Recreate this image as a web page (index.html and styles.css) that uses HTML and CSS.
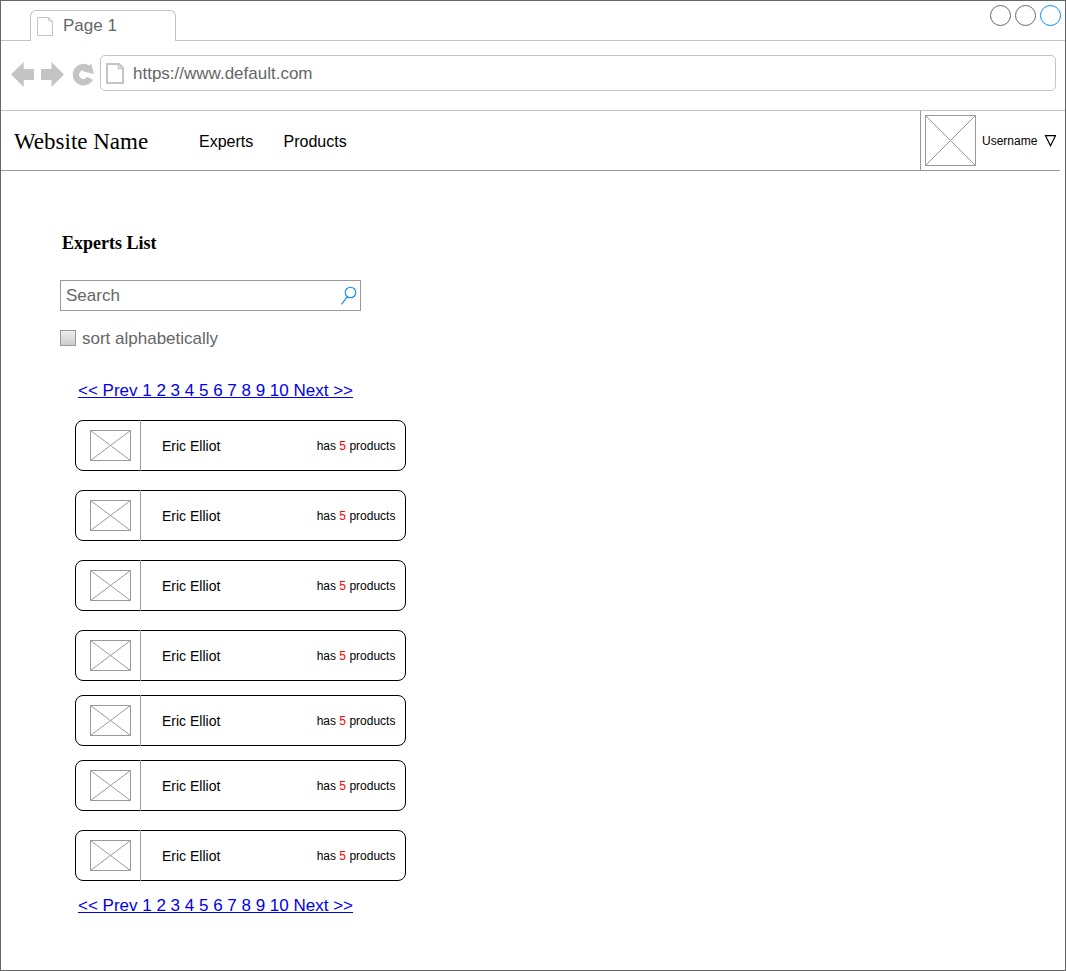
FILE: index.html
```html
<!DOCTYPE html>
<html lang="en">
<head>
<meta charset="utf-8">
<title>Experts List</title>
<link rel="stylesheet" href="styles.css">
</head>
<body>
<div class="window">
  <div class="tabbar">
    <div class="tabbar-start"></div>
    <div class="tab">
      <svg class="tab-icon" width="17" height="20" viewBox="0 0 17 20"><path d="M.5.5H11.5L15.5 4.5V18.5H.5ZM11.5.5L12 4L15.5 4.5"/></svg>
      <span>Page 1</span>
    </div>
    <div class="tabbar-rest">
      <svg width="72" height="23" viewBox="0 0 72 23"><g fill="none"><circle cx="10.5" cy="11.5" r="10" stroke="#666"/><circle cx="35.5" cy="11.5" r="10" stroke="#666"/><circle cx="60.5" cy="11.5" r="10" stroke="#008cff"/></g></svg>
    </div>
  </div>
  <div class="toolbar">
    <svg class="nav-icons" width="84" height="28" viewBox="10 60 84 28">
      <path d="M11 74.5L23.7 62V69H34V80H23.7V87Z"/>
      <path d="M64 74.5L51.5 62V69H41V80H51.5V87Z"/>
      <path class="reload" d="M87.5 68.2A7.6 7.6 0 1 0 90.1 78.4"/>
      <path d="M91.3 63.5L93.8 74L82.5 71.3Z"/>
    </svg>
    <div class="address">
      <svg class="page-icon" width="18" height="21" viewBox="0 0 18 21"><path d="M1 1H13L17 5V20H1Z"/><path class="fold" d="M12.5 1V5.5H17"/></svg>
      <span>https://www.default.com</span>
    </div>
  </div>
  <header class="header">
    <div class="brand">Website Name</div>
    <nav class="menu"><span>Experts</span><span>Products</span></nav>
    <div class="user">
      <svg width="51" height="51" viewBox="0 0 51 51" class="placeholder"><path d="M.5.5H50.5V50.5H.5ZM.5.5L50.5 50.5M50.5.5L.5 50.5"/></svg>
      <span class="username">Username</span>
      <svg class="caret" width="12" height="12" viewBox="0 0 12 12"><path d="M1.5 .7H11.5L6.5 10.7Z"/></svg>
    </div>
  </header>
  <main class="content">
    <h1>Experts List</h1>
    <div class="search">
      <span>Search</span>
      <svg width="18" height="21" viewBox="0 0 18 21"><circle cx="10.5" cy="7.5" r="5.3"/><path d="M7.2 11.8L1.5 19.3"/></svg>
    </div>
    <div class="sort"><span class="checkbox"></span><span class="sort-label">sort alphabetically</span></div>
    <a class="pager">&lt;&lt; Prev 1 2 3 4 5 6 7 8 9 10 Next &gt;&gt;</a>
    <div class="list">
      <div class="card"><div class="thumb"><svg width="41" height="31" viewBox="0 0 41 31" class="placeholder"><path d="M.5.5H40.5V30.5H.5ZM.5.5L40.5 30.5M40.5.5L.5 30.5"/></svg></div><span class="name">Eric Elliot</span><span class="count">has <b>5</b> products</span></div>
      <div class="card"><div class="thumb"><svg width="41" height="31" viewBox="0 0 41 31" class="placeholder"><path d="M.5.5H40.5V30.5H.5ZM.5.5L40.5 30.5M40.5.5L.5 30.5"/></svg></div><span class="name">Eric Elliot</span><span class="count">has <b>5</b> products</span></div>
      <div class="card"><div class="thumb"><svg width="41" height="31" viewBox="0 0 41 31" class="placeholder"><path d="M.5.5H40.5V30.5H.5ZM.5.5L40.5 30.5M40.5.5L.5 30.5"/></svg></div><span class="name">Eric Elliot</span><span class="count">has <b>5</b> products</span></div>
      <div class="card tight"><div class="thumb"><svg width="41" height="31" viewBox="0 0 41 31" class="placeholder"><path d="M.5.5H40.5V30.5H.5ZM.5.5L40.5 30.5M40.5.5L.5 30.5"/></svg></div><span class="name">Eric Elliot</span><span class="count">has <b>5</b> products</span></div>
      <div class="card tight"><div class="thumb"><svg width="41" height="31" viewBox="0 0 41 31" class="placeholder"><path d="M.5.5H40.5V30.5H.5ZM.5.5L40.5 30.5M40.5.5L.5 30.5"/></svg></div><span class="name">Eric Elliot</span><span class="count">has <b>5</b> products</span></div>
      <div class="card"><div class="thumb"><svg width="41" height="31" viewBox="0 0 41 31" class="placeholder"><path d="M.5.5H40.5V30.5H.5ZM.5.5L40.5 30.5M40.5.5L.5 30.5"/></svg></div><span class="name">Eric Elliot</span><span class="count">has <b>5</b> products</span></div>
      <div class="card"><div class="thumb"><svg width="41" height="31" viewBox="0 0 41 31" class="placeholder"><path d="M.5.5H40.5V30.5H.5ZM.5.5L40.5 30.5M40.5.5L.5 30.5"/></svg></div><span class="name">Eric Elliot</span><span class="count">has <b>5</b> products</span></div>
    </div>
    <a class="pager">&lt;&lt; Prev 1 2 3 4 5 6 7 8 9 10 Next &gt;&gt;</a>
  </main>
</div>
</body>
</html>
```
FILE: styles.css
```css
* { box-sizing: border-box; }
body { margin: 0; background: #fff; color: #000; font-family: "Liberation Sans", Arial, sans-serif; }
svg { display: block; flex: none; }
.window { width: 1066px; height: 971px; border: 1px solid #666; }

.tabbar { display: flex; height: 40px; color: #666; font-size: 17px; }
.tabbar-start { width: 29px; border-bottom: 1px solid #c4c4c4; }
.tab { display: flex; width: 146px; height: 31px; margin-top: 9px; padding: 6px 0 0 6px; gap: 9px; border: 1px solid #c4c4c4; border-bottom: 0; border-radius: 6px 6px 0 0; line-height: 20px; }
.tab span { margin-top: -1px; }
.tab-icon { fill: none; stroke: #c4c4c4; }
.tabbar-rest { display: flex; flex: 1; justify-content: flex-end; padding: 3px 3px 0 0; border-bottom: 1px solid #c4c4c4; }

.toolbar { display: flex; height: 70px; padding: 14px 9px 0; border-bottom: 1px solid #c4c4c4; }
.nav-icons { margin: 5px 6px 0 0; fill: #c4c4c4; }
.nav-icons .reload { fill: none; stroke: #c4c4c4; stroke-width: 6.4; }
.address { display: flex; align-items: center; flex: 1; height: 36px; padding-left: 5px; gap: 9px; border: 1px solid #c4c4c4; border-radius: 5px; color: #666; font-size: 17px; }
.address span { padding-top: 2px; }
.page-icon { fill: none; stroke: #c4c4c4; stroke-width: 2; }
.page-icon .fold { stroke-width: 1.4; }

.header { display: flex; align-items: center; width: 1059px; height: 60px; border-bottom: 1px solid #999; }
.brand { width: 198px; padding: 2px 0 0 13px; font: 23px "Liberation Serif", "Times New Roman", serif; }
.menu { display: flex; flex: 1; gap: 30.3px; padding-top: 2px; font-size: 16px; }
.user { display: flex; align-items: center; width: 140px; height: 59px; padding-left: 4px; border-left: 1px solid #999; font-size: 12px; }
.placeholder { fill: none; stroke: #999; }
.username { margin: 1px 7px 0 6px; }
.caret { fill: none; stroke: #000; stroke-width: 1.2; }

.content { padding: 61px 0 0 59px; }
h1 { height: 22px; margin: 0 0 26px 2px; font: bold 18px/22px "Liberation Serif", "Times New Roman", serif; }
.search { display: flex; justify-content: space-between; align-items: center; width: 301px; height: 31px; padding: 0 2px 0 5px; border: 1px solid #999; color: #666; font-size: 17px; }
.search svg { fill: none; stroke: #008cff; stroke-width: 1.1; }
.sort { display: flex; align-items: center; gap: 6px; height: 20px; margin-top: 17px; color: #666; font-size: 17px; }
.sort-label { padding-top: 2px; }
.checkbox { width: 16px; height: 16px; border: 1px solid #999; background: linear-gradient(#eee, #ccc); }
.pager { display: block; height: 20px; margin: 33px 0 19px 18px; color: #00e; font-size: 17px; line-height: 20px; text-decoration: underline; }
.list { margin-left: 15px; }
.card { display: flex; align-items: center; width: 331px; height: 51px; margin-bottom: 19px; border: 1px solid #000; border-radius: 8px; }
.card.tight { margin-bottom: 14px; }
.card:last-child { margin-bottom: 0; }
.thumb { display: flex; align-items: center; align-self: stretch; width: 65px; margin: -1px 0; padding-left: 14px; border-right: 1px solid #999; }
.name { flex: 1; padding: 1px 0 0 21px; font-size: 14px; }
.count { padding: 1px 9.6px 0 0; font-size: 12px; }
.count b { color: #f00; font-weight: normal; }
.list + .pager { margin-top: 15px; }
```
